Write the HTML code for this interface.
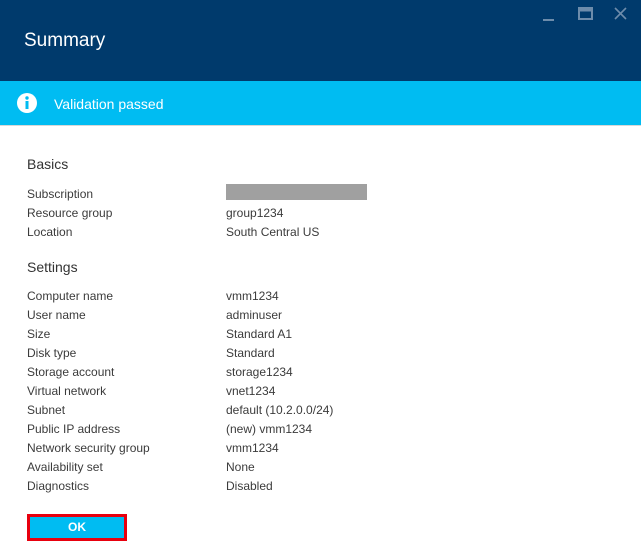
<!DOCTYPE html>
<html><head><style>
body{margin:0;width:641px;height:553px;background:#fff;font-family:"Liberation Sans",sans-serif;position:relative;overflow:hidden;color:#3b3b3b}
.hd{position:absolute;left:0;top:0;width:641px;height:81px;background:#003a6c}
.hd .t{position:absolute;left:24px;top:30px;color:#fff;font-size:19px}
.bn{position:absolute;left:0;top:81px;width:641px;height:44px;background:#00bcf2}
.bn .t{position:absolute;left:54px;top:15px;color:#fff;font-size:14px}
.ic{position:absolute;left:17px;top:93px;width:20px;height:20px;border-radius:50%;background:#fff}
.line{position:absolute;left:0;top:125px;width:641px;height:1px;background:#d8d8d8}
.h{position:absolute;left:27px;font-size:14px;color:#333}
.r{position:absolute;font-size:12px;line-height:14px}
.ok{position:absolute;left:27px;top:514px;width:94px;height:21px;border:3px solid #e8000e;background:#00bcf2;color:#fff;font-weight:bold;font-size:12px;text-align:center;line-height:21px}
</style></head><body>
<div class="hd"><div class="t">Summary</div>
<svg style="position:absolute;left:540px;top:6px" width="95" height="16">
<line x1="3" y1="14" x2="14" y2="14" stroke="#6d8cab" stroke-width="2"/>
<rect x="39" y="2" width="13" height="11" fill="none" stroke="#6d8cab" stroke-width="2"/><line x1="39" y1="4" x2="52" y2="4" stroke="#6d8cab" stroke-width="3"/>
<path d="M75 2L86 13M86 2L75 13" stroke="#6d8cab" stroke-width="1.6"/></svg></div>
<div class="bn"><div class="t">Validation passed</div></div>
<div class="ic"></div>
<svg style="position:absolute;left:17px;top:93px" width="20" height="20"><circle cx="10" cy="5" r="1.7" fill="#00bcf2"/><rect x="8.5" y="8" width="3" height="8" fill="#00bcf2"/></svg>
<div class="line"></div>
<div class="h" style="top:156px">Basics</div>
<div class="h" style="top:259px">Settings</div>
<div style="position:absolute;left:226px;top:184px;width:141px;height:16px;background:#a0a0a0"></div>
<div class="r" style="left:27px;top:187px">Subscription</div>
<div class="r" style="left:27px;top:206px">Resource group</div><div class="r" style="left:226px;top:206px">group1234</div>
<div class="r" style="left:27px;top:225px">Location</div><div class="r" style="left:226px;top:225px">South Central US</div>
<div class="r" style="left:27px;top:289px">Computer name</div><div class="r" style="left:226px;top:289px">vmm1234</div>
<div class="r" style="left:27px;top:308px">User name</div><div class="r" style="left:226px;top:308px">adminuser</div>
<div class="r" style="left:27px;top:327px">Size</div><div class="r" style="left:226px;top:327px">Standard A1</div>
<div class="r" style="left:27px;top:346px">Disk type</div><div class="r" style="left:226px;top:346px">Standard</div>
<div class="r" style="left:27px;top:365px">Storage account</div><div class="r" style="left:226px;top:365px">storage1234</div>
<div class="r" style="left:27px;top:384px">Virtual network</div><div class="r" style="left:226px;top:384px">vnet1234</div>
<div class="r" style="left:27px;top:403px">Subnet</div><div class="r" style="left:226px;top:403px">default (10.2.0.0/24)</div>
<div class="r" style="left:27px;top:422px">Public IP address</div><div class="r" style="left:226px;top:422px">(new) vmm1234</div>
<div class="r" style="left:27px;top:441px">Network security group</div><div class="r" style="left:226px;top:441px">vmm1234</div>
<div class="r" style="left:27px;top:460px">Availability set</div><div class="r" style="left:226px;top:460px">None</div>
<div class="r" style="left:27px;top:479px">Diagnostics</div><div class="r" style="left:226px;top:479px">Disabled</div>
<div class="ok">OK</div>
</body></html>
